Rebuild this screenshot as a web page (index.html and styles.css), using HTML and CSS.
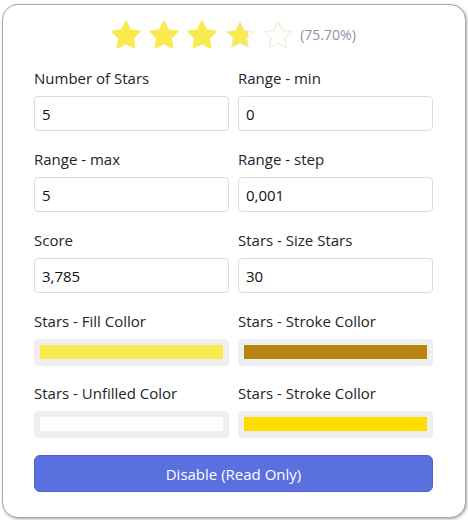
FILE: index.html
```html
<!DOCTYPE html>
<html lang="en">
<head>
<meta charset="utf-8">
<title>Star rating</title>
<link rel="stylesheet" href="styles.css">
</head>
<body>
<div class="card">
  <div class="rating">
    <svg class="star" viewBox="0 0 30 30"><path class="full" d="M15 1.6 L19.2 10.3 L28.6 11.6 L21.8 18.2 L23.4 27.6 L15 23.1 L6.6 27.6 L8.2 18.2 L1.4 11.6 L10.8 10.3 Z"/></svg>
    <svg class="star" viewBox="0 0 30 30"><path class="full" d="M15 1.6 L19.2 10.3 L28.6 11.6 L21.8 18.2 L23.4 27.6 L15 23.1 L6.6 27.6 L8.2 18.2 L1.4 11.6 L10.8 10.3 Z"/></svg>
    <svg class="star" viewBox="0 0 30 30"><path class="full" d="M15 1.6 L19.2 10.3 L28.6 11.6 L21.8 18.2 L23.4 27.6 L15 23.1 L6.6 27.6 L8.2 18.2 L1.4 11.6 L10.8 10.3 Z"/></svg>
    <svg class="star" viewBox="0 0 30 30">
      <defs>
        <linearGradient id="part" x1="0" x2="1" y1="0" y2="0">
          <stop offset="0.785" stop-color="#f9ea50"/>
          <stop offset="0.785" stop-color="#ffffff"/>
        </linearGradient>
      </defs>
      <path class="part" d="M15 1.6 L19.2 10.3 L28.6 11.6 L21.8 18.2 L23.4 27.6 L15 23.1 L6.6 27.6 L8.2 18.2 L1.4 11.6 L10.8 10.3 Z"/>
    </svg>
    <svg class="star" viewBox="0 0 30 30"><path class="empty" d="M15 1.6 L19.2 10.3 L28.6 11.6 L21.8 18.2 L23.4 27.6 L15 23.1 L6.6 27.6 L8.2 18.2 L1.4 11.6 L10.8 10.3 Z"/></svg>
    <span class="pct">(75.70%)</span>
  </div>

  <div class="form">
    <div class="field">
      <label class="label">Number of Stars</label>
      <input class="input" type="text" value="5">
    </div>
    <div class="field">
      <label class="label">Range - min</label>
      <input class="input" type="text" value="0">
    </div>
    <div class="field">
      <label class="label">Range - max</label>
      <input class="input" type="text" value="5">
    </div>
    <div class="field">
      <label class="label">Range - step</label>
      <input class="input" type="text" value="0,001">
    </div>
    <div class="field">
      <label class="label">Score</label>
      <input class="input" type="text" value="3,785">
    </div>
    <div class="field">
      <label class="label">Stars - Size Stars</label>
      <input class="input" type="text" value="30">
    </div>
    <div class="field field-color-first">
      <label class="label">Stars - Fill Collor</label>
      <div class="color"><span class="swatch swatch-fill"></span></div>
    </div>
    <div class="field field-color-first">
      <label class="label">Stars - Stroke Collor</label>
      <div class="color"><span class="swatch swatch-stroke"></span></div>
    </div>
    <div class="field">
      <label class="label">Stars - Unfilled Color</label>
      <div class="color"><span class="swatch swatch-unfilled"></span></div>
    </div>
    <div class="field">
      <label class="label">Stars - Stroke Collor</label>
      <div class="color"><span class="swatch swatch-gold"></span></div>
    </div>
  </div>

  <button class="btn" type="button">Disable (Read Only)</button>
</div>
</body>
</html>
```

FILE: styles.css
```css
* { box-sizing: border-box; }

html, body {
  margin: 0;
  padding: 0;
  background: #ffffff;
}

body {
  padding: 4px 2px 2px 2px;
  font-family: "Open Sans", "Noto Sans", sans-serif;
  color: #212529;
}

.card {
  width: 464px;
  height: 514px;
  border: 1px solid #a9a9a9;
  border-radius: 16px;
  box-shadow: 1px 1px 3px rgba(0, 0, 0, 0.35);
  padding: 15px 32px 0 31px;
  background: #ffffff;
}

.rating {
  display: flex;
  align-items: center;
  justify-content: center;
  height: 30px;
}

.star {
  width: 30px;
  height: 30px;
  margin-right: 8px;
  display: block;
}

.star:nth-child(5) { margin-right: 7px; }

.full {
  fill: #f9ea50;
  stroke: #f9ea50;
  stroke-width: 2;
  stroke-linejoin: round;
}

.part {
  fill: url(#part);
  stroke: #f5e8cf;
  stroke-width: 1;
  stroke-linejoin: round;
}

.empty {
  fill: #ffffff;
  stroke: #f3e5cb;
  stroke-width: 1;
  stroke-linejoin: round;
}

.pct {
  font-size: 14px;
  color: #8a93ab;
  line-height: 20px;
}

.form {
  display: grid;
  grid-template-columns: 195px 195px;
  column-gap: 9px;
  margin-top: 17px;
}

.field {
  display: flex;
  flex-direction: column;
  margin-bottom: 17px;
}

.field-color-first { margin-bottom: 16px; }

.label {
  font-size: 15px;
  line-height: 22px;
  margin-bottom: 7px;
  color: #212529;
}

.input {
  height: 35px;
  width: 100%;
  border: 1px solid #dcdcdc;
  border-radius: 4px;
  padding: 0 7px;
  font-family: inherit;
  font-size: 15px;
  color: #111111;
  background: #ffffff;
  outline: none;
}

.color {
  height: 27px;
  background: #efefef;
  border-radius: 4px;
  padding: 6px 6px 7px 6px;
  display: flex;
}

.swatch {
  flex: 1;
  display: block;
}

.swatch-fill { background: #f9eb4f; }
.swatch-stroke { background: #b98512; }
.swatch-unfilled { background: #ffffff; }
.swatch-gold { background: #ffdc00; }

.btn {
  display: block;
  width: 399px;
  height: 37px;
  border: 1px solid #4e62c8;
  border-radius: 6px;
  background: #5a70df;
  color: #ffffff;
  font-family: inherit;
  font-size: 15px;
  padding: 0;
}
```
